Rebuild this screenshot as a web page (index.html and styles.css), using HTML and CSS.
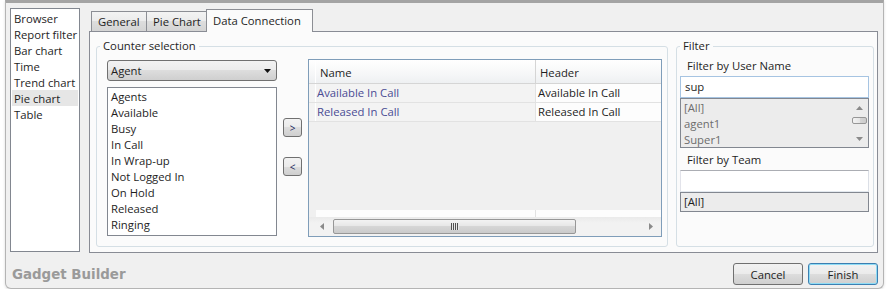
FILE: index.html
```html
<!DOCTYPE html>
<html lang="en">
<head>
    <meta charset="UTF-8">
    <title>Gadget Builder</title>
    <link rel="stylesheet" href="styles.css">
</head>
<body>
<div class="window">
    <div class="main">
        <ul class="nav-list">
            <li>Browser</li>
            <li>Report filter</li>
            <li>Bar chart</li>
            <li>Time</li>
            <li>Trend chart</li>
            <li class="selected">Pie chart</li>
            <li>Table</li>
        </ul>

        <div class="tabs">
            <div class="tab-strip">
                <div class="tab tab-general">General</div>
                <div class="tab tab-pie">Pie Chart</div>
                <div class="tab tab-data active">Data Connection</div>
            </div>

            <div class="tab-panel">
                <fieldset class="group counter-group">
                    <legend>Counter selection</legend>
                    <div class="counter-body">
                        <div class="picker">
                            <div class="combo">
                                <span>Agent</span>
                                <svg width="7" height="4" viewBox="0 0 7 4"><path d="M0 0h7L3.5 4z" fill="#111"/></svg>
                            </div>
                            <ul class="listbox counters">
                                <li>Agents</li>
                                <li>Available</li>
                                <li>Busy</li>
                                <li>In Call</li>
                                <li>In Wrap-up</li>
                                <li>Not Logged In</li>
                                <li>On Hold</li>
                                <li>Released</li>
                                <li>Ringing</li>
                            </ul>
                        </div>

                        <div class="move-buttons">
                            <button class="small-btn">&gt;</button>
                            <button class="small-btn">&lt;</button>
                        </div>

                        <div class="grid">
                            <div class="grid-row grid-head">
                                <div class="row-head"></div>
                                <div class="col-name">Name</div>
                                <div class="col-header">Header</div>
                            </div>
                            <div class="grid-row">
                                <div class="row-head"></div>
                                <div class="col-name">Available In Call</div>
                                <div class="col-header">Available In Call</div>
                            </div>
                            <div class="grid-row">
                                <div class="row-head"></div>
                                <div class="col-name">Released In Call</div>
                                <div class="col-header">Released In Call</div>
                            </div>
                            <div class="grid-fill"></div>
                            <div class="grid-new">
                                <div class="col-name"></div>
                                <div class="col-header"></div>
                            </div>
                            <div class="hscroll">
                                <div class="scroll-btn">
                                    <svg width="4" height="7" viewBox="0 0 4 7"><path d="M4 0v7L0 3.5z" fill="#8a8a8a"/></svg>
                                </div>
                                <div class="hthumb"><span class="grip"></span></div>
                                <div class="scroll-space"></div>
                                <div class="scroll-btn">
                                    <svg width="4" height="7" viewBox="0 0 4 7"><path d="M0 0v7L4 3.5z" fill="#8a8a8a"/></svg>
                                </div>
                            </div>
                        </div>
                    </div>
                </fieldset>

                <fieldset class="group filter-group">
                    <legend>Filter</legend>
                    <div class="filter-body">
                        <div class="filter-label">Filter by User Name</div>
                        <div class="textbox focused">sup</div>
                        <div class="listbox users">
                            <ul>
                                <li>[All]</li>
                                <li>agent1</li>
                                <li>Super1</li>
                            </ul>
                            <div class="vscroll">
                                <div class="vscroll-btn">
                                    <svg width="7" height="4" viewBox="0 0 7 4"><path d="M0 4h7L3.5 0z" fill="#8a8a8a"/></svg>
                                </div>
                                <div class="vthumb"></div>
                                <div class="scroll-space"></div>
                                <div class="vscroll-btn">
                                    <svg width="7" height="4" viewBox="0 0 7 4"><path d="M0 0h7L3.5 4z" fill="#8a8a8a"/></svg>
                                </div>
                            </div>
                        </div>

                        <div class="filter-label team-label">Filter by Team</div>
                        <div class="textbox"></div>
                        <div class="listbox teams">
                            <ul>
                                <li>[All]</li>
                            </ul>
                        </div>
                    </div>
                </fieldset>
            </div>
        </div>
    </div>

    <div class="footer">
        <span class="brand">Gadget Builder</span>
        <button class="btn">Cancel</button>
        <button class="btn default">Finish</button>
    </div>
</div>
</body>
</html>
```

FILE: styles.css
```css
* {
    box-sizing: border-box;
}

body {
    margin: 0;
    background: #fff;
    font-family: "Open Sans", "Segoe UI", sans-serif;
    font-size: 11.3px;
    color: #1e1e1e;
}

ul {
    margin: 0;
    padding: 0;
    list-style: none;
}

.window {
    width: 879px;
    height: 289px;
    margin-left: 5px;
    background: #f0f0f0;
    border: 1px solid #b4b4b4;
    border-top: 3px solid #a4a4a4;
    border-radius: 0 0 6px 6px;
    box-shadow: 0 1px 3px rgba(0, 0, 0, 0.15);
    display: flex;
    flex-direction: column;
}

.main {
    display: flex;
    gap: 9px;
    height: 250px;
    padding: 5px 0 0 4px;
}

/* left navigation */
.nav-list {
    width: 70px;
    height: 244px;
    padding: 1px;
    background: #fff;
    border: 1px solid #828790;
    overflow: hidden;
}

.nav-list li {
    height: 16px;
    line-height: 17px;
    padding-left: 2px;
    white-space: nowrap;
}

.nav-list .selected {
    background: #e6e6e6;
}

/* tabs */
.tabs {
    width: 789px;
    display: flex;
    flex-direction: column;
}

.tab-strip {
    display: flex;
    align-items: flex-end;
    height: 22px;
    margin-top: 1px;
    padding-left: 2px;
}

.tab {
    height: 20px;
    line-height: 20px;
    padding-left: 6px;
    border: 1px solid #8c8e94;
    border-bottom: none;
    background: linear-gradient(#f3f3f3, #ebebeb 50%, #dddddd 50%, #d4d4d4);
    white-space: nowrap;
}

.tab-general {
    width: 56px;
}

.tab-pie {
    width: 61px;
    margin-left: -1px;
}

.tab-data {
    width: 107px;
    margin-left: -1px;
}

.tab.active {
    position: relative;
    z-index: 1;
    height: 23px;
    line-height: 21px;
    margin-bottom: -1px;
    padding-left: 6px;
    background: #fbfbfb;
}

.tab-panel {
    height: 222px;
    display: flex;
    gap: 8px;
    padding: 6px 3px 5px 6px;
    background: #fbfbfb;
    border: 1px solid #898c95;
}

/* group boxes */
.group {
    margin: 0;
    padding: 0;
    min-width: 0;
    border: 1px solid #d5dfe5;
    border-radius: 3px;
}

.group legend {
    margin-left: 3px;
    padding: 0 3px;
    line-height: 16px;
}

.counter-group {
    width: 572px;
}

.filter-group {
    width: 198px;
}

.counter-body {
    display: flex;
    gap: 6px;
    padding: 5px 5px 9px 10px;
}

.picker {
    width: 170px;
    display: flex;
    flex-direction: column;
}

.combo {
    height: 21px;
    margin-top: 1px;
    padding: 0 5px 0 3px;
    display: flex;
    align-items: center;
    justify-content: space-between;
    border: 1px solid #707070;
    border-radius: 3px;
    background: linear-gradient(#f2f2f2, #ebebeb 50%, #dddddd 50%, #cfcfcf);
}

.listbox {
    border: 1px solid #828790;
}

.counters {
    height: 149px;
    margin-top: 6px;
    padding: 1px 0 0 3px;
    background: #fff;
}

.counters li,
.users li,
.teams li {
    height: 16px;
    line-height: 16px;
}

.move-buttons {
    width: 19px;
    display: flex;
    flex-direction: column;
    gap: 20px;
    padding-top: 59px;
}

.small-btn {
    width: 19px;
    height: 19px;
    padding: 0;
    font: inherit;
    font-size: 10px;
    color: #14245a;
    border: 1px solid #707070;
    border-radius: 3px;
    background: linear-gradient(#f2f2f2, #ebebeb 50%, #dddddd 50%, #cfcfcf);
}

/* data grid */
.grid {
    width: 354px;
    height: 178px;
    display: flex;
    flex-direction: column;
    background: #f0f0f0;
    border: 1px solid #7f9db9;
}

.grid-row {
    display: flex;
    height: 19px;
    line-height: 18px;
    border-bottom: 1px solid #e2e2e2;
}

.grid-row .row-head {
    width: 7px;
    background: #f3f3f3;
    border-right: 1px solid #fff;
}

.grid-row .col-name {
    width: 220px;
    padding-left: 1px;
    color: #4a4c93;
    background: #f3f3f3;
    border-right: 1px solid #e2e2e2;
}

.grid-row .col-header {
    flex: 1;
    padding-left: 2px;
    background: #fdfdfd;
}

.grid-row.grid-head {
    height: 24px;
    line-height: 25px;
    background: linear-gradient(#ffffff, #f6f7f8 60%, #eef0f2);
    border-bottom: 1px solid #d5d5d5;
}

.grid-head .row-head,
.grid-head .col-name,
.grid-head .col-header {
    background: transparent;
    color: #1e1e1e;
}

.grid-head .col-name {
    padding-left: 4px;
    border-right-color: #d5d5d5;
}

.grid-head .col-header {
    padding-left: 4px;
}

.grid-fill {
    flex: 1;
}

.grid-new {
    display: flex;
    height: 7px;
    margin-left: 7px;
    background: #fdfdfd;
}

.grid-new .col-name {
    width: 220px;
    border-right: 1px solid #e2e2e2;
}

.hscroll {
    height: 19px;
    display: flex;
    align-items: center;
    padding: 0 2px 0 4px;
    background: linear-gradient(#eaeaea, #f2f2f2 30%, #f2f2f2);
}

.scroll-btn {
    width: 17px;
    display: flex;
    justify-content: center;
}

.hthumb {
    width: 243px;
    height: 15px;
    margin-left: 3px;
    display: flex;
    align-items: center;
    justify-content: center;
    border: 1px solid #979797;
    border-radius: 2px;
    background: linear-gradient(#f3f3f3, #e6e6e6 50%, #d6d6d6 50%, #cbcbcb);
}

.grip {
    width: 8px;
    height: 7px;
    background: repeating-linear-gradient(90deg, #505050 0 1px, #e8e8e8 1px 2px);
}

.scroll-space {
    flex: 1;
}

/* filter */
.filter-body {
    padding: 4px 4px 0 3px;
}

.filter-label {
    line-height: 16px;
    padding-left: 7px;
    margin-bottom: 2px;
}

.team-label {
    margin-top: 4px;
}

.textbox {
    height: 22px;
    line-height: 20px;
    padding-left: 4px;
    background: #fff;
    border: 1px solid;
    border-color: #abadb3 #dbdfe6 #e3e9ef #e2e3ea;
}

.textbox.focused {
    border-color: #a6c4e2;
}

.users,
.teams {
    display: flex;
    background: #ececec;
}

.users {
    height: 50px;
    color: #6d6d6d;
}

.users ul,
.teams ul {
    flex: 1;
    padding: 1px 0 0 3px;
}

.teams {
    height: 20px;
}

.teams ul {
    padding-top: 1px;
}

.vscroll {
    width: 17px;
    display: flex;
    flex-direction: column;
    align-items: center;
}

.vscroll-btn {
    height: 17px;
    display: flex;
    align-items: center;
}

.vthumb {
    width: 15px;
    height: 7px;
    margin-top: 1px;
    border: 1px solid #979797;
    border-radius: 2px;
    background: linear-gradient(90deg, #f3f3f3, #e6e6e6 50%, #d6d6d6 50%, #cbcbcb);
}

/* footer */
.footer {
    flex: 1;
    display: flex;
    align-items: center;
    gap: 5px;
    padding: 10px 5px 3px 6px;
}

.brand {
    margin-right: auto;
    font-family: "DejaVu Sans", sans-serif;
    font-weight: bold;
    font-size: 13.4px;
    color: #9a9a9a;
}

.btn {
    width: 70px;
    height: 22px;
    padding: 0;
    font: inherit;
    color: #1e1e1e;
    border: 1px solid #707070;
    border-radius: 3px;
    background: linear-gradient(#f2f2f2, #ebebeb 50%, #dddddd 50%, #cfcfcf);
}

.btn.default {
    border-color: #3c7fb1;
    box-shadow: inset 0 0 0 1px #8fdcf5;
}
```
